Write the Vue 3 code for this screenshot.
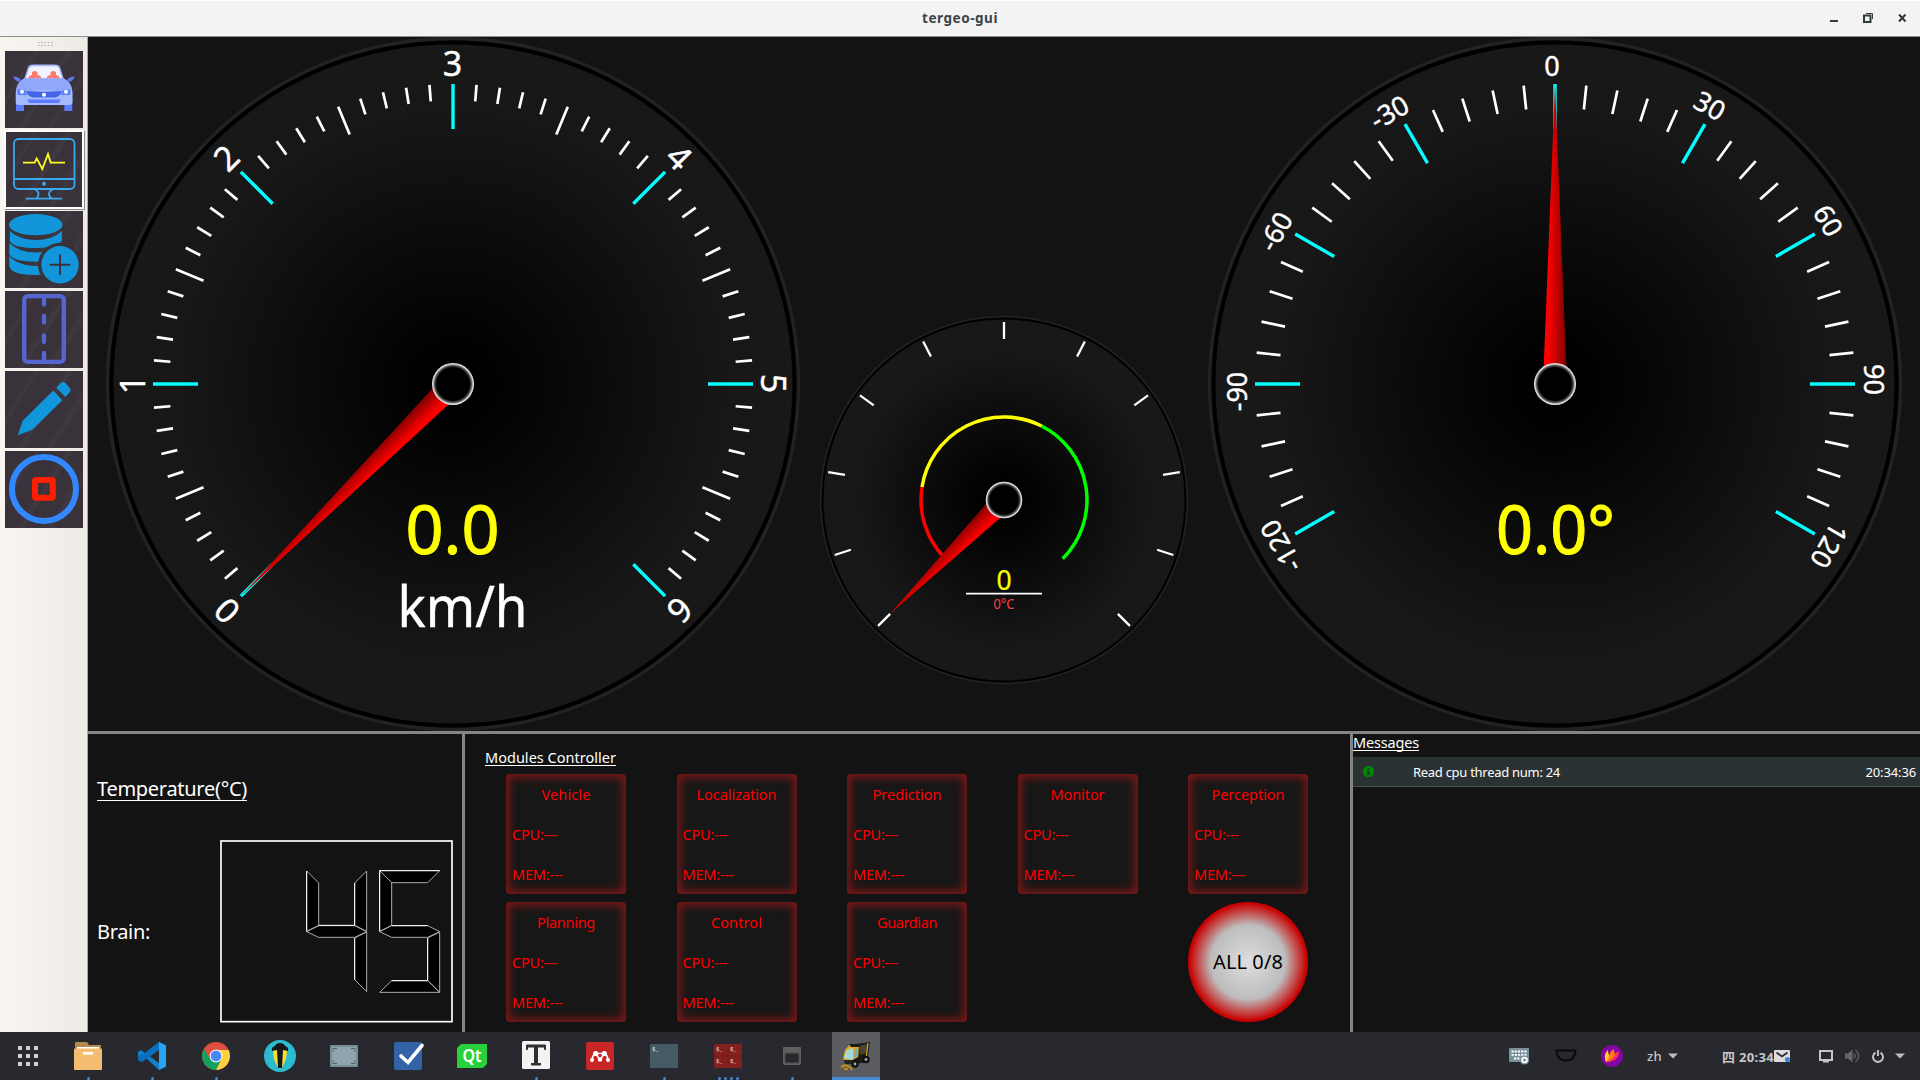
<script setup>
// Adjusts letter spacing so that a label takes up the given width in pixels.
const vFit = {
  mounted(el, { value }) {
    const range = document.createRange()
    range.selectNodeContents(el)
    const width = range.getBoundingClientRect().width
    el.style.letterSpacing = (value - width) / el.textContent.length + 'px'
  },
}

const speedTicks = Array.from({ length: 61 }, (_, i) => ({
  angle: -135 + i * 4.5,
  inner: i % 10 === 0 ? 255 : i % 5 === 0 ? 270 : 283.5,
  major: i % 10 === 0,
}))
const speedLabels = Array.from({ length: 7 }, (_, i) => ({ text: String(i), angle: -135 + i * 45 }))

const steerTicks = Array.from({ length: 41 }, (_, i) => ({
  angle: -120 + i * 6,
  inner: i % 5 === 0 ? 255 : 276,
  major: i % 5 === 0,
}))
const steerLabels = [
  { text: '-120', angle: -120, shift: -3.5 },
  { text: '-90', angle: -90, shift: -7.5 },
  { text: '-60', angle: -60, shift: -7.5 },
  { text: '-30', angle: -30, shift: -7.5 },
  { text: '0', angle: 0, shift: -3 },
  { text: '30', angle: 30, shift: -5 },
  { text: '60', angle: 60, shift: -5 },
  { text: '90', angle: 90, shift: -4.5 },
  { text: '120', angle: 120, shift: 3 },
]

const smallTicks = Array.from({ length: 11 }, (_, i) => -135 + i * 27)

function point(r, deg) {
  const a = (deg * Math.PI) / 180
  return `${(r * Math.sin(a)).toFixed(2)} ${(-r * Math.cos(a)).toFixed(2)}`
}
function arc(from, to) {
  return `M${point(83, from)} A83 83 0 ${to - from > 180 ? 1 : 0} 1 ${point(83, to)}`
}
const arcs = [
  { d: arc(-135, -81), color: '#ff0000' },
  { d: arc(-81, 27), color: '#ffff00' },
  { d: arc(27, 135), color: '#00ff00' },
]

const modules = [
  { name: 'Vehicle', width: 49 },
  { name: 'Localization', width: 80 },
  { name: 'Prediction', width: 69 },
  { name: 'Monitor', width: 54 },
  { name: 'Perception', width: 73 },
  { name: 'Planning', width: 58 },
  { name: 'Control', width: 51 },
  { name: 'Guardian', width: 60 },
]

const tools = ['car', 'monitor', 'database', 'road', 'pencil', 'record']
const apps = [
  { id: 'grid', dots: 0 },
  { id: 'files', dots: 1 },
  { id: 'code', dots: 1 },
  { id: 'chrome', dots: 1 },
  { id: 'torch', dots: 0 },
  { id: 'shot', dots: 0 },
  { id: 'todo', dots: 0 },
  { id: 'qt', dots: 0 },
  { id: 'typora', dots: 1 },
  { id: 'mendeley', dots: 0 },
  { id: 'term', dots: 1 },
  { id: 'tmux', dots: 4 },
  { id: 'window', dots: 1 },
  { id: 'sweeper', dots: 0, active: true },
]
</script>

<template>
  <div class="screen">
    <svg class="defs" width="0" height="0">
      <defs>
        <radialGradient id="dial">
          <stop offset="0" stop-color="#000" />
          <stop offset="0.12" stop-color="#010101" />
          <stop offset="0.8" stop-color="#171717" />
          <stop offset="1" stop-color="#181818" />
        </radialGradient>
        <radialGradient id="hub">
          <stop offset="0" stop-color="#000" />
          <stop offset="0.78" stop-color="#000" />
          <stop offset="0.88" stop-color="#555" />
          <stop offset="0.94" stop-color="#c8c8c8" />
          <stop offset="1" stop-color="#f0f0f0" />
        </radialGradient>
        <linearGradient id="needle">
          <stop offset="0" stop-color="#ff0000" />
          <stop offset="0.25" stop-color="#fa0000" />
          <stop offset="1" stop-color="#780000" />
        </linearGradient>
      </defs>
    </svg>

    <header class="titlebar">
      <span v-fit="76" class="title">tergeo-gui</span>
      <svg class="winbtns" width="90" height="34" viewBox="0 0 90 34">
        <rect x="0" y="20" width="8" height="2" fill="#2f3a3c" />
        <rect x="34" y="15.5" width="6.5" height="6.5" fill="none" stroke="#2f3a3c" stroke-width="2" />
        <path d="M36 13.5H42.5V19" fill="none" stroke="#2f3a3c" />
        <path d="M69 14.5L75.500 21.500M75.500 14.500L69 21.500" stroke="#2f3a3c" stroke-width="2" />
      </svg>
    </header>

    <div class="work">
      <aside class="toolbar">
        <div class="grip"></div>
        <div v-for="t in tools" :key="t" class="tool" :class="{ checked: t === 'monitor' }">
          <svg v-if="t === 'car'" width="78" height="77" viewBox="0 0 78 77">
            <path d="M20 28L23.500 17Q24.500 14.400 28 14.400H50Q53.500 14.400 54.500 17L58 28Z" fill="#f1f3ff" stroke="#a8b8fb" stroke-width="1.600" />
            <path d="M23 27.500Q24 24 27 24V21.500Q27 20 29.700 20T32.500 21.500V24Q36 24 36.500 27.500Z M41.500 27.500Q42 24 45.500 24V21.500Q45.500 20 48.300 20T51 21.500V24Q54 24 55 27.500Z" fill="#ff7a6b" />
            <path d="M8.300 25.500Q13 25 16 29L14 31Q9 29 8.300 25.500ZM69.700 25.500Q65 25 62 29L64 31Q69 29 69.700 25.500Z" fill="#5b78f5" />
            <rect x="11" y="48" width="8" height="12" fill="#5c7cff" />
            <rect x="59.300" y="48" width="8" height="12" fill="#5c7cff" />
            <path d="M19 27.500H59Q67.500 32 67.500 42V51Q67.500 54 64 54H14Q10.700 54 10.700 51V42Q10.700 32 19 27.500Z" fill="#a6bbff" />
            <path d="M19 27.500H59Q65 31 67 38L56 41Q39 37 22 41L11.500 38Q13 31 19 27.500Z" fill="#8fa8fb" />
            <path d="M12 38.500L20 39L22 44H13ZM66 38.500L58 39L56 44H65Z" fill="#5c7cff" />
            <path d="M21 40Q39 41.500 57 40Q55 46 49 46.500H29Q23 46 21 40Z" fill="#4565e8" />
            <path d="M22 48.500H56L54 52H24Z" fill="#5c7cff" />
            <circle cx="17" cy="40.800" r="2" fill="#fff" /><circle cx="61" cy="40.800" r="2" fill="#fff" /><circle cx="39" cy="43.800" r="2" fill="#fff" />
          </svg>
          <svg v-else-if="t === 'monitor'" width="78" height="77" viewBox="0 0 78 77" fill="none" stroke="#3ba9ee" stroke-width="1.800">
            <rect x="9" y="8" width="60.500" height="50" rx="4.500" />
            <path d="M9 48H69.500M20.700 67.700H57.300M30 58.500Q33.500 60 33.500 63T31.500 67.500M48 58.500Q44 60 44 63T47 67.500" />
            <circle cx="39" cy="52.800" r="2" fill="#3ba9ee" stroke="none" />
            <path d="M18 31.600H29.700L31.700 27.400L37.300 38L43 22.900L45.700 31.600H60" stroke="#ffff1a" />
          </svg>
          <svg v-else-if="t === 'database'" width="78" height="77" viewBox="0 0 78 77">
            <g fill="#1296db">
              <path d="M4.300 45V55Q6 64 31 64Q36 64 38 63V55Q14 56 4.300 45Z" />
              <path d="M4.300 32V43Q7 50.500 31 50.700Q54 50 57.300 43V32Q48 41.500 31 41.500T4.300 32Z" />
              <path d="M4.300 19V30Q7 37.500 31 37.700Q54 37 57.300 30V19Q48 28.500 31 28.500T4.300 19Z" stroke="#39323b" />
              <ellipse cx="30.700" cy="13.700" rx="26.700" ry="10.600" />
            </g>
            <circle cx="55" cy="53.800" r="22" fill="#39323b" />
            <circle cx="55" cy="53.800" r="18.700" fill="#1296db" />
            <path d="M45.500 53.800H64.500M55 44.300V63.300" stroke="#39323b" stroke-width="2" stroke-linecap="round" />
          </svg>
          <svg v-else-if="t === 'road'" width="78" height="77" viewBox="0 0 78 77" stroke="#5566d0" stroke-width="4.300" fill="none">
            <rect x="19.200" y="5.200" width="39.600" height="65.600" rx="3.500" />
            <path d="M39 6V13.500M39 25V31.500M39 44.500V51M39 62V70" stroke-linecap="round" />
          </svg>
          <svg v-else-if="t === 'pencil'" width="78" height="77" viewBox="0 0 78 77" fill="#1296db">
            <path d="M12.700 64.300L17.700 49.800L48.300 19.500L57.300 29.200L27.300 58.800Z" />
            <path d="M51.300 16.800L55.500 12.200Q58 10 60.500 12L64.800 17Q66.300 19 65 21L60.300 26Z" />
          </svg>
          <svg v-else width="78" height="77" viewBox="0 0 78 77" fill="none">
            <circle cx="39" cy="38" r="32" stroke="#3388ff" stroke-width="6" />
            <rect x="30" y="29" width="17.800" height="17.800" rx="1" stroke="#ff1e00" stroke-width="6" stroke-linejoin="round" />
          </svg>
        </div>
      </aside>

      <main class="main">
        <section class="gauges">
          <svg class="big" width="696" height="696" viewBox="-348 -348 696 696">
            <circle r="345.500" fill="none" stroke="#222" stroke-width="3.500" />
            <circle r="341.500" fill="url(#dial)" stroke="#000" stroke-width="4" />
            <line v-for="t in speedTicks" :key="t.angle" x1="0" x2="0" y1="-300" :y2="-t.inner" :stroke="t.major ? '#00ffff' : '#fff'" :stroke-width="t.major ? 3.4 : 2.7" :transform="`rotate(${t.angle})`" />
            <text v-for="l in speedLabels" :key="l.text" class="num" font-size="34" x="-0.500" y="-308" :transform="`rotate(${l.angle})`">{{ l.text }}</text>
            <path d="M-12 0L0 -300L12 0Z" fill="url(#needle)" transform="rotate(-135)" />
            <circle r="21" fill="url(#hub)" />
            <text class="num yellow" font-size="68" x="-0.500" y="169.500" textLength="94" lengthAdjust="spacingAndGlyphs">0.0</text>
            <text class="num" font-size="56" x="9.500" y="242.500" textLength="130" lengthAdjust="spacingAndGlyphs">km/h</text>
          </svg>
          <svg class="small" width="370" height="370" viewBox="-185 -185 370 370">
            <circle r="183.300" fill="none" stroke="#222" stroke-width="1.800" />
            <circle r="181.500" fill="url(#dial)" stroke="#000" stroke-width="2" />
            <line v-for="a in smallTicks" :key="a" x1="0" x2="0" y1="-178" y2="-161" stroke="#fff" stroke-width="2.300" :transform="`rotate(${a})`" />
            <path v-for="a in arcs" :key="a.color" :d="a.d" fill="none" :stroke="a.color" stroke-width="3.500" />
            <path d="M-11 0L0 -161L11 0Z" fill="url(#needle)" transform="rotate(-135)" />
            <circle r="18.300" fill="url(#hub)" />
            <text class="num yellow thin" font-size="26.500" y="90">0</text>
            <path d="M-38 93.700H38" stroke="#fff" stroke-width="1.800" />
            <text class="num red" font-size="13.500" y="109" textLength="21" lengthAdjust="spacingAndGlyphs">0°C</text>
          </svg>
          <svg class="big" width="696" height="696" viewBox="-348 -348 696 696">
            <circle r="345.500" fill="none" stroke="#222" stroke-width="3.500" />
            <circle r="341.500" fill="url(#dial)" stroke="#000" stroke-width="4" />
            <line v-for="t in steerTicks" :key="t.angle" x1="0" x2="0" y1="-300" :y2="-t.inner" :stroke="t.major ? '#00ffff' : '#fff'" :stroke-width="t.major ? 3.4 : 2.7" :transform="`rotate(${t.angle})`" />
            <text v-for="l in steerLabels" :key="l.text" class="num" font-size="27" :x="l.shift" y="-308.500" :transform="`rotate(${l.angle})`">{{ l.text }}</text>
            <path d="M-12 0L0 -300L12 0Z" fill="url(#needle)" />
            <circle r="21" fill="url(#hub)" />
            <text class="num yellow" font-size="68" x="0.500" y="169.500" textLength="119" lengthAdjust="spacingAndGlyphs">0.0°</text>
          </svg>
        </section>

        <section class="panels">
          <div class="temp">
            <div><span v-fit="150" class="heading large">Temperature(°C)</span></div>
            <div class="brain">
              <span v-fit="53" class="brain-label">Brain:</span>
              <svg class="lcd" width="233" height="183" viewBox="420 345 699 549" stroke-width="3" stroke="#aaa" fill="#000">
                <rect x="423" y="348" width="693" height="542" fill="none" stroke="#fff" stroke-width="5" />
                <path d="M680 438L716 474V601L680 619ZM860 438V619L824 601V474ZM860 621V800L824 764V639ZM680 620L716 602H824L860 620L824 637H716Z" />
                <path d="M899 437H1079L1043 473H935ZM899 437L935 473V601L899 619ZM899 620L935 602H1043L1079 620L1043 637H935ZM1079 621V802L1043 766V639ZM899 802L935 767H1043L1079 802Z" />
                <path d="M680 438V619M824 474V601H716M824 639V764M899 437H1079M899 437V619M935 602H1043M1043 639V766M935 767H1043" fill="none" stroke="#fff" />
              </svg>
            </div>
          </div>

          <div class="modules">
            <span v-fit="131" class="heading">Modules Controller</span>
            <div class="cards">
              <div v-for="m in modules" :key="m.name" class="card">
                <div class="name"><span v-fit="m.width">{{ m.name }}</span></div>
                <div><span v-fit="45">CPU:---</span></div>
                <div><span v-fit="51">MEM:---</span></div>
              </div>
              <div class="all"><span v-fit="70">ALL 0/8</span></div>
            </div>
          </div>

          <div class="messages">
            <span v-fit="66" class="heading">Messages</span>
            <div class="msg">
              <svg width="11" height="11" viewBox="0 0 11 11">
                <circle cx="5.500" cy="5.500" r="5.500" fill="#008a00" />
                <path d="M4.600 2H6.600V3.500H4.600ZM3.800 4.500H6.600V8H7.400V9H3.600V8H4.500V5.400H3.800Z" fill="#1d4020" />
              </svg>
              <span v-fit="147" class="msg-text">Read cpu thread num: 24</span>
              <span v-fit="50.5" class="msg-time">20:34:36</span>
            </div>
          </div>
        </section>
      </main>
    </div>

    <footer class="taskbar">
      <div class="apps">
        <div v-for="a in apps" :key="a.id" class="app" :class="{ active: a.active, first: a.id === 'grid' }">
          <svg width="36" height="36" viewBox="-18 -18 36 36">
            <g v-if="a.id === 'grid'" fill="#d0d0d0">
              <path d="M-10-10h4v4h-4zM-2-10h4v4h-4zM6-10h4v4h-4zM-10-2h4v4h-4zM-2-2h4v4h-4zM6-2h4v4h-4zM-10 6h4v4h-4zM-2 6h4v4h-4zM6 6h4v4h-4z" />
            </g>
            <g v-else-if="a.id === 'files'">
              <path d="M-13-13Q-13-14-12-14H-1L1-11H12Q13-11 13-10V0H-13Z" fill="#b58a50" />
              <rect x="-11" y="-9" width="22" height="4" fill="#fff" />
              <rect x="-14" y="-7.500" width="28" height="21.500" rx="1" fill="#f4bd72" />
              <rect x="-5" y="-4" width="10" height="2.500" fill="#fff" />
            </g>
            <g v-else-if="a.id === 'code'">
              <path d="M7-14L14-10.500V10.500L7 14L-10-1.500L-14 2V-4L-11-6L7 7Z" fill="#0f80cc" />
              <path d="M-11 6L-14 4V2L7-14V-6L-10 6Z" fill="#0a6fc0" />
              <path d="M7-14L14-10.500V10.500L7 14Z" fill="#27a4f2" />
            </g>
            <g v-else-if="a.id === 'chrome'">
              <circle r="14" fill="#dd4f40" />
              <path d="M-12.100-7A14 14 0 0 0 0 14L5.500 3.200L-5.500 3.200Z" fill="#12a05c" />
              <path d="M0 14A14 14 0 0 0 12.600-6H0L5.500 3.200Z" fill="#ffcf42" />
              <circle r="6.400" fill="#fff" /><circle r="5.400" fill="#4688f4" />
            </g>
            <g v-else-if="a.id === 'torch'">
              <circle r="16" fill="#2cbcd2" />
              <path d="M-7-6H7Q7 7 0 13Q-7 7-7-6Z" fill="#f7e02c" />
              <path d="M-8-5Q-9-9-5-10Q-4-13 0-13T5-10Q9-9 8-5L3-6L2 12H-2L-3-6Z" fill="#17181a" />
            </g>
            <g v-else-if="a.id === 'shot'">
              <rect x="-14" y="-11" width="28" height="22" rx="1" fill="#748e9a" />
              <rect x="-12" y="-9" width="24" height="18" fill="#8fa4ae" />
              <path d="M-11-4V-7.500H-7M7-7.500H11V-4M11 4V7.500H7M-7 7.500H-11V4" fill="none" stroke="#4b6470" />
            </g>
            <g v-else-if="a.id === 'todo'">
              <rect x="-14" y="-14" width="28" height="28" rx="2" fill="#3463a5" />
              <path d="M-7 0L0 6.500L14-10.500" fill="none" stroke="#fff" stroke-width="3.600" stroke-linecap="round" />
            </g>
            <g v-else-if="a.id === 'qt'">
              <path d="M-11-12H15V8L11 12H-15V-8Z" fill="#28d13c" />
              <text x="0" y="6" text-anchor="middle" fill="#fff" font-size="17" font-weight="600" textLength="19" lengthAdjust="spacingAndGlyphs">Qt</text>
            </g>
            <g v-else-if="a.id === 'typora'">
              <rect x="-14" y="-15" width="28" height="28" rx="1.500" fill="#f3f3f3" />
              <path d="M-9.500-11H9.500V-6.500H8.500V-9H1.500V7.500H4.500V9H-4.500V7.500H-1.500V-9H-8.500V-6.500H-9.500Z" fill="#2e2e2e" stroke="#2e2e2e" />
            </g>
            <g v-else-if="a.id === 'mendeley'">
              <rect x="-14" y="-14" width="28" height="28" rx="2" fill="#c92727" />
              <path d="M-8 4Q-7.500-1-4.500-2.500L0 3.500L4.500-2.500Q7.500-1 8 4M-4.500-4Q0 0 4.500-4" fill="none" stroke="#fff" stroke-width="1.800" />
              <circle cx="-8" cy="4" r="2" fill="#fff" /><circle cx="8" cy="4" r="2" fill="#fff" /><circle cx="0" cy="3.500" r="2.200" fill="#fff" />
              <circle cx="-4.300" cy="-2.500" r="2.600" fill="#fff" /><circle cx="4.300" cy="-2.500" r="2.600" fill="#fff" />
              <circle cx="0" cy="-.500" r="1.700" fill="#c92727" />
            </g>
            <g v-else-if="a.id === 'term'">
              <rect x="-14" y="-12" width="28" height="24" rx="1" fill="#465a65" />
              <text x="-12" y="-5" fill="#dfe5e8" font-size="6">$_</text>
            </g>
            <g v-else-if="a.id === 'tmux'">
              <rect x="-14" y="-12" width="28" height="24" rx="1" fill="#84211f" />
              <path d="M0-12V12M-14 0H14" stroke="#751b1a" />
              <text x="-12" y="-5" fill="#e8d0d0" font-size="6">$_</text><text x="2" y="-5" fill="#e8d0d0" font-size="6">$_</text>
              <text x="-12" y="6.500" fill="#e8d0d0" font-size="6">$_</text><text x="2" y="6.500" fill="#e8d0d0" font-size="6">$_</text>
            </g>
            <g v-else-if="a.id === 'window'">
              <rect x="-8" y="-8" width="16" height="16" rx="1" fill="none" stroke="#606060" stroke-width="2" />
              <rect x="-9" y="-9" width="18" height="6" rx="1" fill="#606060" />
              <path d="M-7-3H7V7H-7Z" fill="none" stroke="#505050" />
            </g>
            <g v-else>
              <path d="M0-12L14-14L12 0L13 6L6 7L-2 2Z" fill="#1c1b19" />
              <path d="M3-10L11-12L10-3L4-1Z" fill="#4a4436" />
              <path d="M12-13L10 3" stroke="#e3a920" stroke-width="1.300" />
              <path d="M-13 3L-11-6L-6-12L3-11L2 5L-6 7Z" fill="#e3a920" />
              <path d="M-7-12L3-12L4-9L-5-9Z" fill="#1c1b19" />
              <path d="M-12 2L-10-5L-5-8L-3-7V4Z" fill="#a5d8da" />
              <path d="M-1-7L2-8L1 0L-2 2Z" fill="#79aeb0" />
              <path d="M-5 5L2 1L7 1V6L2 8Z" fill="#1c1b19" />
              <circle cx="-1" cy="8" r="3.700" fill="#111" /><circle cx="-1" cy="8" r="1.400" fill="#aaa" />
              <circle cx="10" cy="3.500" r="3.700" fill="#111" /><circle cx="10" cy="3.500" r="1.400" fill="#aaa" />
              <path d="M-12 4H-4V8H-11Z" fill="#222" />
              <path d="M-15 11L-11 9L-6 11L-4 14M-12 13H-8" stroke="#c58d14" stroke-width="2" fill="none" />
            </g>
          </svg>
          <div class="dots"><i v-for="n in a.dots" :key="n"></i></div>
        </div>
      </div>

      <div class="tray">
        <svg width="22" height="18" viewBox="0 0 22 18">
          <rect x="0" y="1" width="20" height="14" rx="1" fill="#78909c" />
          <path d="M2.500 4.500H18M2.500 7.800H18M5 11.500H11" stroke="#fff" stroke-width="1.800" stroke-dasharray="2.200 1" />
          <circle cx="15.500" cy="13" r="4.600" fill="#78909c" /><circle cx="15.500" cy="13" r="2.400" fill="none" stroke="#fff" stroke-width="1.800" />
        </svg>
        <svg class="bowl" width="22" height="14" viewBox="0 0 22 14">
          <path d="M1.500 1.500H20.500Q20 11.500 11 11.500T1.500 1.500Z" fill="none" stroke="#0b0b0c" stroke-width="2" />
        </svg>
        <svg class="flame" width="22" height="22" viewBox="0 0 22 22">
          <circle cx="11" cy="11" r="11" fill="#8405a5" />
          <path d="M5 17Q2 10 7 5Q7 9 8.500 10Q9 6 13 4Q13 8 14 9Q15 7 18 6.500Q17.500 13 12 15.500Q8 17 5 17Z" fill="#ff7a12" />
          <path d="M5 17Q2 10 7 5Q7 9 8 11Q8 14 5 17Z" fill="#ffcf2a" />
          <path d="M14 10Q15 7 18 6.500Q17.500 13 12 15.500Q9 16.500 6 17Q12 14 14 10Z" fill="#ff2b6b" />
        </svg>
        <span v-fit="15" class="lang">zh</span>
        <svg class="caret" width="10" height="6" viewBox="0 0 10 6"><path d="M0 .500H10L5 5.500Z" fill="#bdbdbd" /></svg>
        <span v-fit="52" class="clock">四 20:34</span>
        <svg class="mail" width="17" height="13" viewBox="0 0 17 13">
          <rect width="16" height="12" rx="1" fill="#dcdcdc" />
          <path d="M2.500 2.500L8 6.500L13.500 2.500" fill="none" stroke="#28292e" stroke-width="1.800" />
          <circle cx="13.500" cy="9.500" r="2.600" fill="#3f83d3" />
        </svg>
        <svg class="screen-ico" width="14" height="13" viewBox="0 0 14 13">
          <rect x="1" y="1" width="12" height="9" fill="none" stroke="#c6c6c6" stroke-width="2" /><path d="M4 10H10V12.500H4Z" fill="#c6c6c6" />
        </svg>
        <svg class="vol" width="15" height="14" viewBox="0 0 15 14">
          <path d="M0 4.500H3L7.500 .500V13.500L3 9.500H0Z" fill="#66676b" />
          <path d="M9 4.500Q11 7 9 9.500M10.500 1Q17 7 10.500 13" stroke="#5b5c60" stroke-width="1.600" fill="none" />
        </svg>
        <svg class="power" width="12" height="13" viewBox="0 0 12 13">
          <path d="M3.500 2.600A5 5 0 1 0 8.500 2.600M6 0V6" stroke="#c6c6c6" stroke-width="1.900" fill="none" />
        </svg>
        <svg class="caret last" width="10" height="6" viewBox="0 0 10 6"><path d="M0 .500H10L5 5.500Z" fill="#bdbdbd" /></svg>
      </div>
    </footer>
  </div>
</template>

<style>
body {
  margin: 0;
  background: #131313;
}
</style>

<style scoped>
.screen {
  width: 1920px;
  height: 1080px;
  display: flex;
  flex-direction: column;
  overflow: hidden;
  background: #131313;
  color: #fff;
  font-family: "Noto Sans", "Noto Sans CJK SC", sans-serif;
  font-size: 14.5px;
  white-space: nowrap;
}
svg {
  display: block;
  flex: none;
}
.defs {
  position: absolute;
}
.titlebar {
  box-sizing: border-box;
  height: 37px;
  flex: none;
  display: grid;
  grid-template-columns: 1fr auto 1fr;
  background: #f3f3f3;
  border-top: 1px solid #fff;
  border-bottom: 1px solid #8f8e88;
}
.title {
  grid-column: 2;
  color: #3a4446;
  font-weight: 700;
  font-size: 13.5px;
  line-height: 35px;
}
.winbtns {
  justify-self: end;
  margin-top: -1px;
}
.work {
  display: flex;
  height: 995px;
  flex: none;
}
.toolbar {
  box-sizing: border-box;
  width: 88px;
  flex: none;
  padding: 4px 0 0 5px;
  border-right: 1px solid #a9a7a3;
  background: linear-gradient(90deg, #f9f5f0, #eeebe6);
}
.grip {
  height: 5px;
  width: 17px;
  margin: 0 0 5px 32px;
  background: radial-gradient(circle, #b5b2ad 0.8px, transparent 1.1px) 0 0 / 3.3px 3px;
}
.tool {
  width: 78px;
  height: 77px;
  margin-bottom: 3px;
  background: linear-gradient(122deg, #39323b 0 22%, #403841 25%, #39323b 28% 46%, #413943 52%, #39323b 54% 70%, #403842 74%, #39323b 78%);
}
.tool.checked {
  box-shadow: inset 0 0 0 1px #fff, 0 0 0 1px #fff, 1px 1px 0 1px #8c8a86;
}
.main {
  width: 1832px;
  display: flex;
  flex-direction: column;
}
.gauges {
  height: 694px;
  display: flex;
  justify-content: space-between;
  padding: 0 17px;
  overflow: hidden;
}
.big {
  margin-top: -1px;
}
.small {
  margin-top: 278px;
}
.num {
  fill: #fff;
  stroke: #fff;
  stroke-width: 0.4px;
  text-anchor: middle;
}
.num.yellow {
  fill: #ffff00;
  stroke: #ffff00;
  stroke-width: 1px;
}
.num.yellow.thin {
  stroke-width: 0.2px;
}
.num.red {
  fill: #ff4040;
  stroke: none;
}
.panels {
  flex: 1;
  display: flex;
  border-top: 3px solid #858585;
}
.heading {
  display: inline-block;
  line-height: 15px;
  border-bottom: 1px solid #fff;
  vertical-align: top;
}
.heading.large {
  font-size: 20px;
  line-height: 22px;
}
.temp {
  box-sizing: border-box;
  width: 377px;
  padding: 44px 9px 0;
  border-right: 3px solid #858585;
}
.brain {
  display: flex;
  align-items: center;
  justify-content: space-between;
  margin-top: 39px;
}
.brain-label {
  font-size: 20px;
}
.modules {
  box-sizing: border-box;
  width: 888px;
  padding: 16px 0 0 20px;
  border-right: 3px solid #858585;
}
.cards {
  display: grid;
  grid-template-columns: repeat(5, 120px);
  grid-auto-rows: 120px;
  gap: 8px 50.5px;
  margin: 4px 0 0 21px;
}
.card {
  box-sizing: border-box;
  padding-left: 6px;
  border-radius: 4px;
  background: #171717;
  box-shadow: inset 0 0 10px 3px #831717;
  color: #ff0000;
  line-height: 40px;
}
.card .name {
  margin-left: -6px;
  text-align: center;
}
.all {
  grid-column: 5;
  border-radius: 50%;
  background: radial-gradient(circle closest-side, #dedede, #bdbdbd 62%, #c80000 98%);
  color: #000;
  font-size: 20px;
  line-height: 120px;
  text-align: center;
}
.messages {
  flex: 1;
  padding-top: 1px;
}
.msg {
  box-sizing: border-box;
  height: 30px;
  margin-top: 2px;
  padding: 0 4px 0 10px;
  display: flex;
  align-items: center;
  background: #2a3234;
  border-bottom: 1px solid #47504e;
  font-size: 13px;
}
.msg-text {
  margin-left: 39px;
  line-height: 28px;
}
.msg-time {
  margin-left: auto;
}
.taskbar {
  height: 48px;
  flex: none;
  display: flex;
  justify-content: space-between;
  background: #28292e;
}
.apps {
  display: flex;
  gap: 16px;
}
.app {
  width: 48px;
  height: 48px;
  display: flex;
  flex-direction: column;
  align-items: center;
  padding-top: 6px;
  box-sizing: border-box;
}
.app.first {
  padding-left: 8px;
}
.app.active {
  background: #5b5c60;
  box-shadow: inset 0 -3px #4a88d8;
}
.dots {
  display: flex;
  gap: 3px;
  padding-top: 3px;
}
.dots i {
  width: 3px;
  height: 3px;
  border-radius: 50%;
  background: #4a88d8;
}
.tray {
  width: 411px;
  display: flex;
  align-items: center;
  color: #c6c6c6;
  font-size: 13px;
}
.bowl {
  margin-left: 24px;
}
.flame {
  margin-left: 24px;
}
.lang {
  margin-left: 24px;
  font-weight: 500;
}
.caret {
  margin-left: 6px;
}
.clock {
  margin-left: 44px;
  font-weight: 700;
}
.screen-ico {
  margin-left: 28px;
}
.vol {
  margin-left: 12px;
}
.power {
  margin-left: 12px;
}
.caret.last {
  margin-left: 11px;
}
</style>
